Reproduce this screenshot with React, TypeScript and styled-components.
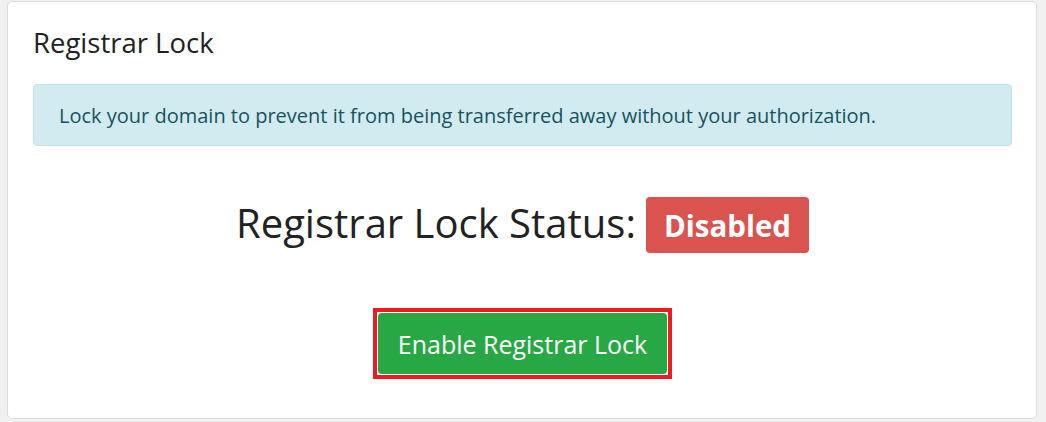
import React from "react";
import styled, { createGlobalStyle } from "styled-components";

const Global = createGlobalStyle`
  html, body { margin: 0; padding: 0; background: #f0f0f0; }
  body { font-family: "Open Sans", "Noto Sans", sans-serif; }
`;

const Page = styled.div`
  padding: 1px 9px 0 7px;
`;

const Card = styled.section`
  box-sizing: border-box;
  width: 1030px;
  height: 418px;
  background: #fff;
  border: 1px solid #dcdcdc;
  border-radius: 5px;
  padding: 0 24px 0 25px;
  display: flex;
  flex-direction: column;
`;

const Title = styled.h3`
  margin: 22px 0 0 0;
  font-size: 27.5px;
  font-weight: 400;
  line-height: 38px;
  color: #222;
`;

const Alert = styled.div`
  box-sizing: border-box;
  margin-top: 22px;
  height: 62px;
  background: #d1ebf0;
  border: 1px solid #bfe3ea;
  border-radius: 4px;
  padding: 0 25px;
  display: flex;
  align-items: center;
  color: #17535f;
  font-size: 20px;
`;

const StatusRow = styled.div`
  margin-top: 51px;
  height: 56px;
  display: flex;
  justify-content: center;
  align-items: center;
  gap: 10px;
`;

const StatusText = styled.span`
  font-size: 40px;
  color: #222;
  line-height: 48px;
  padding-bottom: 5px;
`;

const Badge = styled.span`
  box-sizing: border-box;
  height: 56px;
  padding: 0 18px;
  display: inline-flex;
  align-items: center;
  background: #d9534f;
  color: #fff;
  font-weight: 700;
  font-size: 29.5px;
  border-radius: 4px;
`;

const ButtonRow = styled.div`
  margin-top: 55px;
  display: flex;
  justify-content: center;
`;

const Highlight = styled.div`
  border: 4px solid #ed1c24;
  padding: 1px;
  background: #fff;
`;

const Button = styled.button`
  box-sizing: border-box;
  width: 289px;
  height: 61px;
  border: none;
  border-radius: 4px;
  background: #28a745;
  color: #fff;
  font-family: "Open Sans", sans-serif;
  font-size: 25px;
  cursor: pointer;
`;

export default function App() {
  return (
    <>
      <Global />
      <Page>
        <Card>
          <Title>Registrar Lock</Title>
          <Alert>
            Lock your domain to prevent it from being transferred away without
            your authorization.
          </Alert>
          <StatusRow>
            <StatusText>Registrar Lock Status:</StatusText>
            <Badge>Disabled</Badge>
          </StatusRow>
          <ButtonRow>
            <Highlight>
              <Button>Enable Registrar Lock</Button>
            </Highlight>
          </ButtonRow>
        </Card>
      </Page>
    </>
  );
}
